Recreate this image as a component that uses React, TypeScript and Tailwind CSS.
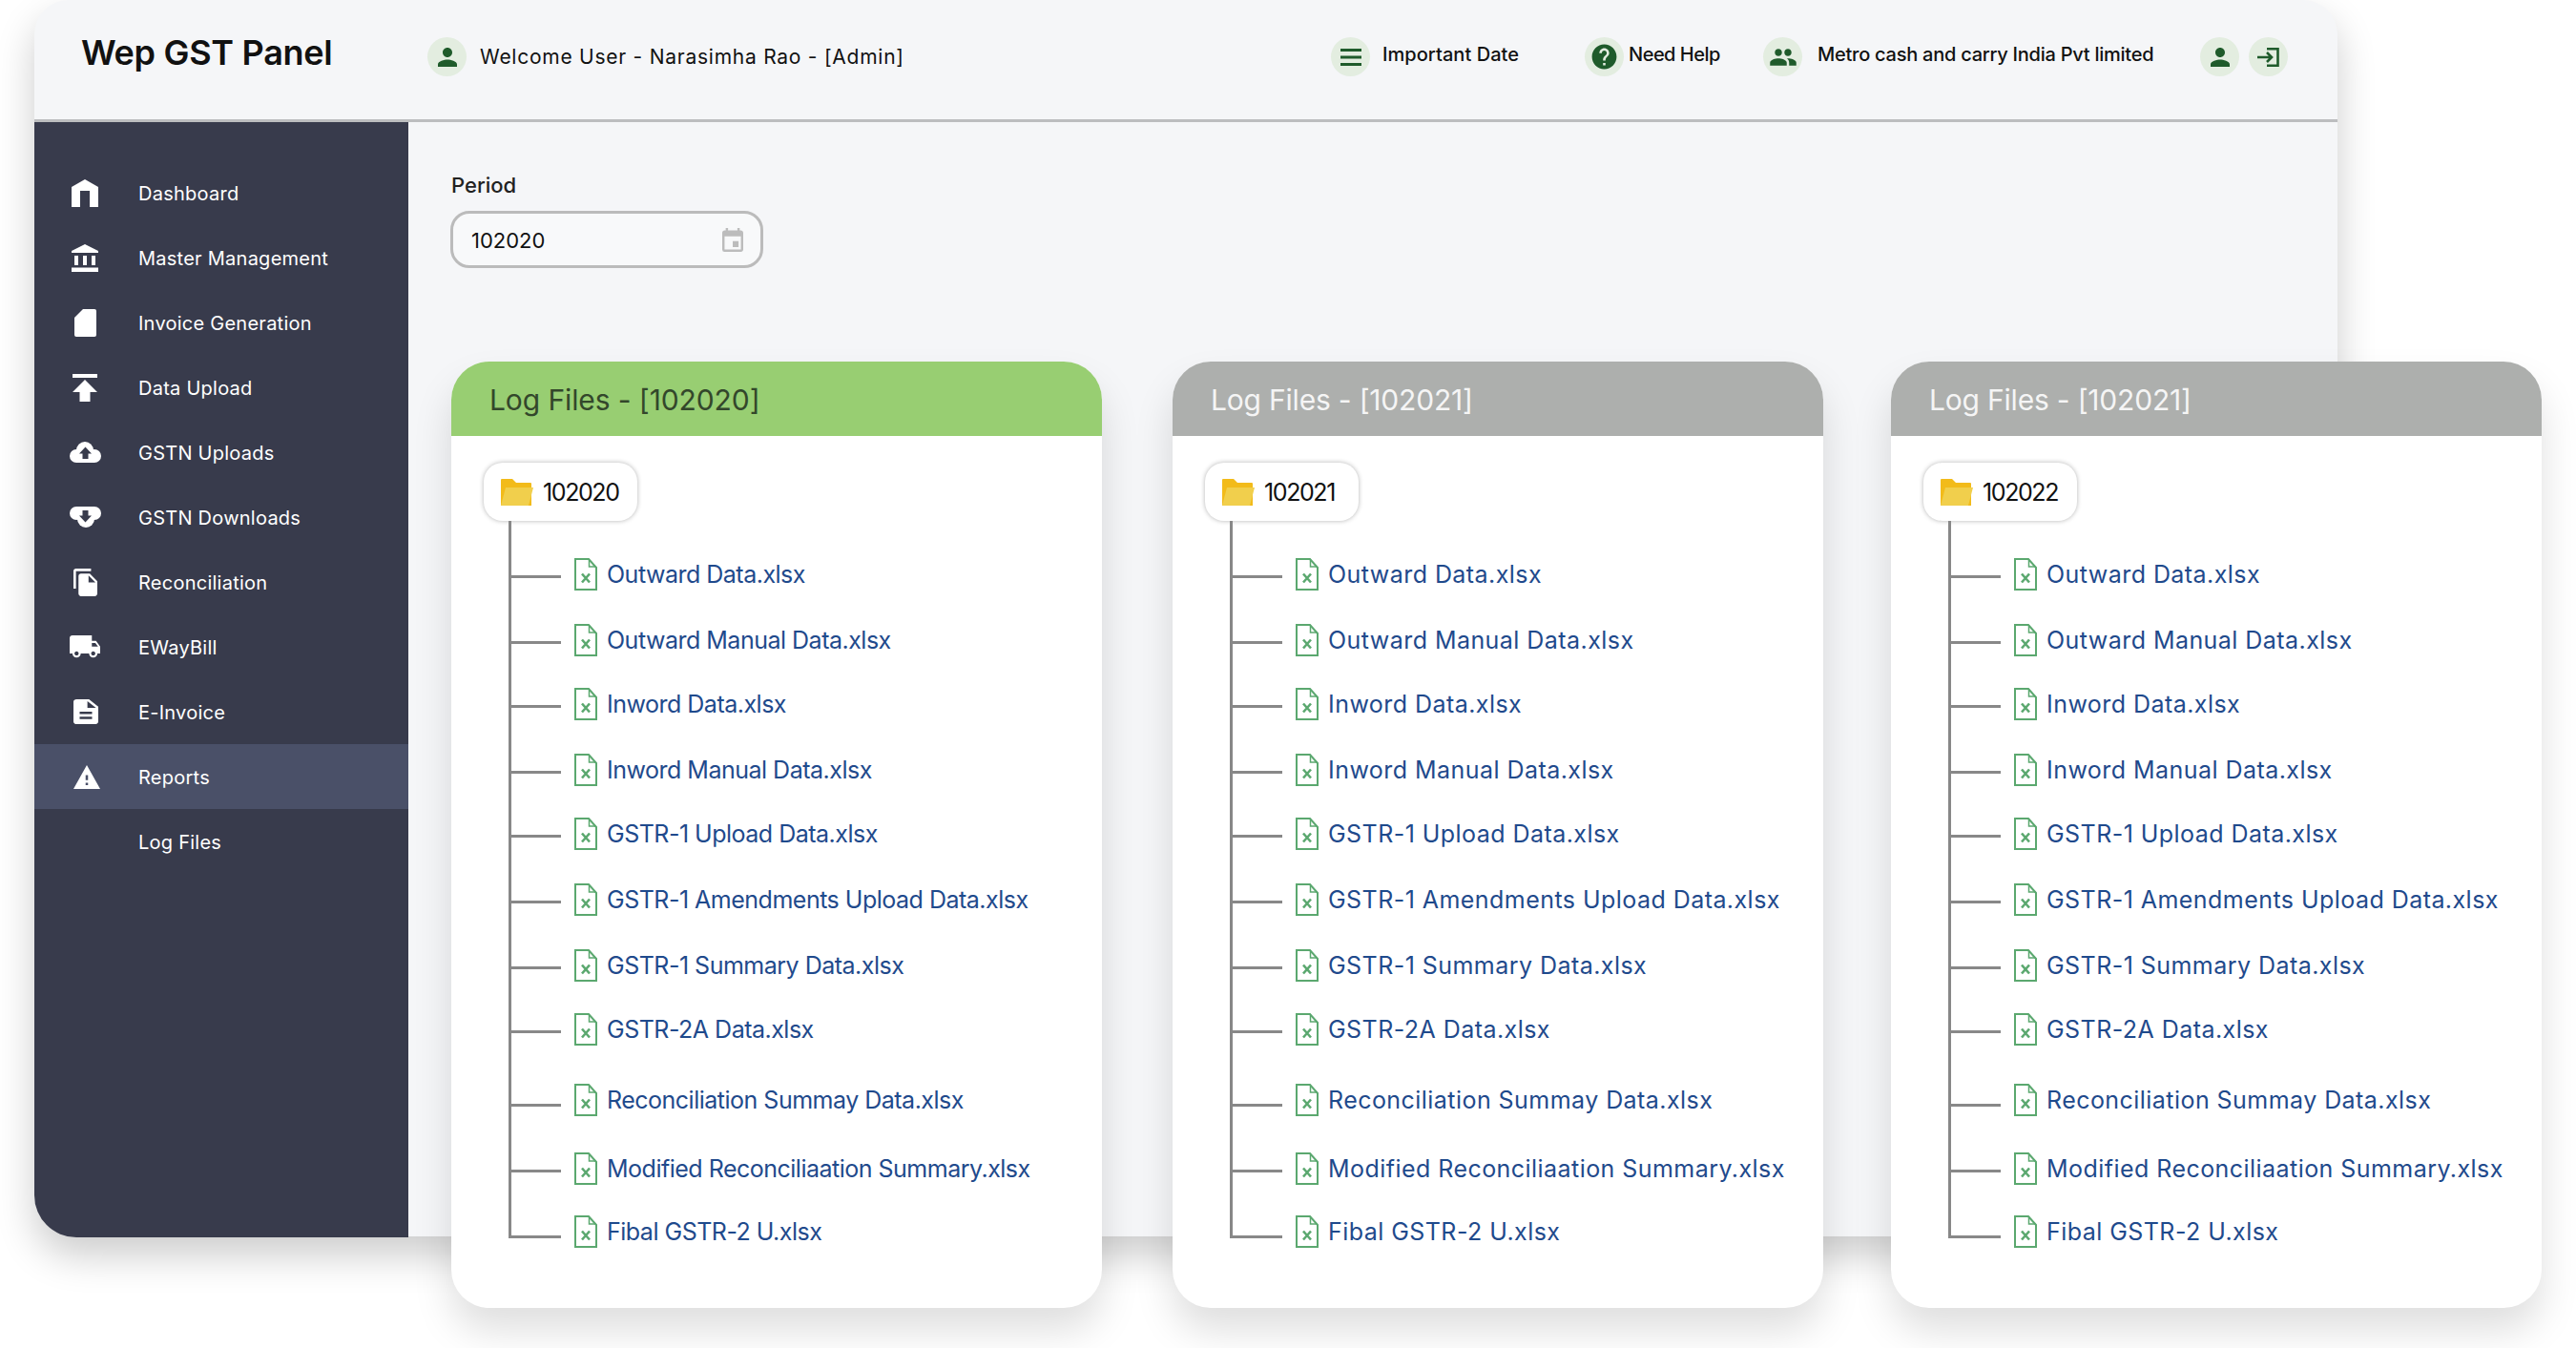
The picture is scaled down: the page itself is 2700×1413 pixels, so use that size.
import type { ReactNode } from "react";
import {
  MdDescription,
  MdEvent,
  MdFileCopy,
  MdHelp,
  MdLocalShipping,
  MdMenu,
  MdPeople,
  MdPerson,
  MdWarning,
} from "react-icons/md";

function HomeIcon() {
  return (
    <svg width="28" height="29" viewBox="0 0 28 29" fill="currentColor">
      <path d="M14 0L28 8V29H19V12H9V29H0V8Z" />
    </svg>
  );
}

function BankIcon() {
  return (
    <svg width="28" height="29" viewBox="0 0 28 29" fill="currentColor">
      <path d="M14 0L28 7V9H0V7ZM3 12H7V22H3ZM12 12H16V22H12ZM21 12H25V22H21ZM0 24.5H28V29H0Z" />
    </svg>
  );
}

function PageIcon() {
  return (
    <svg width="23" height="29" viewBox="0 0 23 29" fill="currentColor">
      <path d="M9 0H21a2 2 0 0 1 2 2V27a2 2 0 0 1-2 2H2a2 2 0 0 1-2-2V9Z" />
    </svg>
  );
}

function UploadIcon() {
  return (
    <svg width="26" height="29" viewBox="0 0 26 29" fill="currentColor">
      <path d="M0 0H26V4H0ZM13 6L26 19H18.5V29H7.5V19H0Z" />
    </svg>
  );
}

// same cloud for both, the download one is just flipped
function CloudIcon({ flip }: { flip?: boolean }) {
  return (
    <svg width="33" height="22" viewBox="0 0 33 22" className={flip ? "rotate-180" : ""}>
      <circle cx="16" cy="9" r="9" fill="#fff" />
      <circle cx="7" cy="15" r="7" fill="#fff" />
      <circle cx="26" cy="15" r="7" fill="#fff" />
      <rect x="7" y="10" width="19" height="12" fill="#fff" />
      <path d="M16.5 5.5L23 12.5H19.5V18H13.5V12.5H10Z" fill="#383b4c" />
    </svg>
  );
}

function LoginIcon() {
  return (
    <svg width="23" height="20" viewBox="0 0 23 20" fill="none" stroke="currentColor" strokeWidth="2.6">
      <path d="M10 1.3H21.5V18.7H10M0 10H15M10 5L15 10L10 15" />
    </svg>
  );
}

function FolderIcon() {
  return (
    <svg width="34" height="28" viewBox="0 0 34 28" className="shrink-0">
      <path d="M0 1a1 1 0 0 1 1-1h11l4 4h15a1 1 0 0 1 1 1v23H0z" fill="#f2bb1a" />
      <path d="M5 9h29l-5 19H0z" fill="#f1cf4c" />
    </svg>
  );
}

function XlsxIcon() {
  return (
    <svg width="24" height="34" viewBox="0 0 24 34" fill="none" className="shrink-0">
      <path d="M1 1h14l8 9v23H1z" stroke="#5ba86f" strokeWidth="2" />
      <path d="M15.5 1.5v7.5h7" stroke="#5ba86f" strokeWidth="1.5" />
      <path d="M8 16.5l8 9M16 16.5l-8 9" stroke="#5ba86f" strokeWidth="2.6" />
    </svg>
  );
}

const navItems = [
  { label: "Dashboard", icon: <HomeIcon /> },
  { label: "Master Management", icon: <BankIcon /> },
  { label: "Invoice Generation", icon: <PageIcon /> },
  { label: "Data Upload", icon: <UploadIcon /> },
  { label: "GSTN Uploads", icon: <CloudIcon /> },
  { label: "GSTN Downloads", icon: <CloudIcon flip /> },
  {
    label: "Reconciliation",
    icon: <MdFileCopy viewBox="2 1 19 22" preserveAspectRatio="none" className="h-[29px] w-[25px]" />,
  },
  {
    label: "EWayBill",
    icon: <MdLocalShipping viewBox="1 4 22 16.5" preserveAspectRatio="none" className="h-[24px] w-[32px]" />,
  },
  {
    label: "E-Invoice",
    icon: <MdDescription viewBox="4 2 16 20" preserveAspectRatio="none" className="ml-[2px] h-[26px] w-[26px]" />,
  },
  {
    label: "Reports",
    icon: <MdWarning viewBox="1 2 22 19" preserveAspectRatio="none" className="ml-[4px] h-[25px] w-[28px]" />,
    active: true,
  },
  { label: "Log Files", icon: null },
];

// spacing is uneven in the design, kept per row
const files = [
  { name: "Outward Data.xlsx", row: "mt-[36px]", stub: "mt-[4px]" },
  { name: "Outward Manual Data.xlsx", row: "mt-[29px]", stub: "mt-[4px]" },
  { name: "Inword Data.xlsx", row: "mt-[27px]", stub: "mt-[4px]" },
  { name: "Inword Manual Data.xlsx", row: "mt-[29px]", stub: "mt-[4px]" },
  { name: "GSTR-1 Upload Data.xlsx", row: "mt-[27px]", stub: "mt-[4px]" },
  { name: "GSTR-1 Amendments Upload Data.xlsx", row: "mt-[29px]", stub: "mt-[4px]" },
  { name: "GSTR-1 Summary Data.xlsx", row: "mt-[29px]", stub: "mt-[4px]" },
  { name: "GSTR-2A Data.xlsx", row: "mt-[27px]", stub: "mt-[4px]" },
  { name: "Reconciliation Summay Data.xlsx", row: "mt-[34px]", stub: "mt-[10px]" },
  { name: "Modified Reconciliaation Summary.xlsx", row: "mt-[32px]", stub: "mt-[4px]" },
  { name: "Fibal GSTR-2 U.xlsx", row: "mt-[26px]", stub: "mt-[10px]" },
];

const cards = [
  {
    title: "Log Files - [102020]",
    folder: "102020",
    head: "bg-[#98ce72] text-[#33472b] tracking-[-0.1px]",
    text: "tracking-[-0.5px]",
    gap: "",
  },
  {
    title: "Log Files - [102021]",
    folder: "102021",
    head: "bg-[#adafad] text-[#f5f5f5] tracking-[-0.2px]",
    text: "tracking-[0.45px]",
    gap: "ml-[74px]",
  },
  {
    title: "Log Files - [102021]",
    folder: "102022",
    head: "bg-[#adafad] text-[#f5f5f5] tracking-[-0.2px]",
    text: "tracking-[0.45px]",
    gap: "ml-[71px]",
  },
];

function Badge({ children }: { children: ReactNode }) {
  return (
    <span className="flex h-[41px] w-[41px] shrink-0 items-center justify-center rounded-full bg-[#e3ede0] text-[#1f5b2b]">
      {children}
    </span>
  );
}

function LogCard({ card }: { card: (typeof cards)[number] }) {
  return (
    <section
      className={`flex h-[992px] w-[682px] shrink-0 flex-col overflow-hidden rounded-[40px] bg-white shadow-[0_24px_40px_rgba(0,0,0,0.13)] ${card.gap}`}
    >
      <h2 className={`flex h-[78px] shrink-0 items-center pl-[40px] text-[30px] leading-[34px] font-normal ${card.head}`}>
        <span className="translate-y-[1px]">{card.title}</span>
      </h2>
      <div className="mt-[28px] ml-[34px] flex h-[61px] w-[161px] items-center gap-[10px] rounded-[20px] bg-white pl-[18px] text-[25px] text-[#111] shadow-[0_0_5px_rgba(0,0,0,0.3)]">
        <FolderIcon />
        <span className="translate-y-[1px] tracking-[-1.4px]">{card.folder}</span>
      </div>
      <ul className="ml-[60px] h-[752px] border-l-[3px] border-[#888]">
        {files.map((f) => (
          <li key={f.name} className={`flex h-[40px] items-center ${f.row}`}>
            <span className={`h-[3px] w-[52px] shrink-0 bg-[#888] ${f.stub}`} />
            <span className="ml-[14px]">
              <XlsxIcon />
            </span>
            <span className={`ml-[10px] translate-y-[1px] whitespace-nowrap text-[25px] text-[#1f4a8c] ${card.text}`}>
              {f.name}
            </span>
          </li>
        ))}
      </ul>
    </section>
  );
}

export default function App() {
  return (
    <div className="h-[1413px] w-[2700px] overflow-hidden bg-white font-['Inter','Liberation_Sans',sans-serif]">
      <div className="ml-[36px] flex h-[1296px] w-[2414px] flex-col rounded-t-[36px] rounded-bl-[44px] bg-[#f5f6f8] shadow-[0_20px_40px_rgba(0,0,0,0.2)]">
        {/* Top bar */}
        <header className="flex h-[128px] shrink-0 border-b-[3px] border-[#bcbdbf] pt-[39px] text-[#111]">
          <h1 className="ml-[49px] w-[363px] -translate-y-[2px] text-[36px] leading-[36px] font-semibold tracking-[-0.3px]">
            Wep GST Panel
          </h1>
          <Badge>
            <MdPerson size={30} />
          </Badge>
          <span className="ml-[14px] w-[892px] text-[21px] leading-[41px] tracking-[0.75px]">
            Welcome User - Narasimha Rao - [Admin]
          </span>
          <Badge>
            <MdMenu viewBox="3 6 18 12" preserveAspectRatio="none" className="h-[18px] w-[22px]" />
          </Badge>
          <span className="ml-[13px] w-[212px] -translate-y-[2px] text-[20px] leading-[41px] font-medium tracking-[0.05px]">
            Important Date
          </span>
          <Badge>
            <MdHelp size={31} />
          </Badge>
          <span className="ml-[5px] w-[141px] -translate-y-[2px] text-[20px] leading-[41px] font-medium tracking-[-0.5px]">
            Need Help
          </span>
          <Badge>
            <MdPeople size={30} />
          </Badge>
          <span className="ml-[16px] w-[401px] -translate-y-[2px] text-[20px] leading-[41px] font-medium tracking-[-0.25px]">
            Metro cash and carry India Pvt limited
          </span>
          <Badge>
            <MdPerson size={30} />
          </Badge>
          <span className="ml-[10px]">
            <Badge>
              <LoginIcon />
            </Badge>
          </span>
        </header>

        <div className="flex min-h-0 flex-1">
          {/* Sidebar */}
          <nav className="h-[1169px] w-[392px] shrink-0 rounded-bl-[44px] bg-[#383b4c] pt-[40px] text-white">
            {navItems.map((item) => (
              <div
                key={item.label}
                className={`flex h-[68px] items-center ${item.active ? "bg-[#4a5068]" : ""}`}
              >
                <span className="ml-[33px] mr-[36px] flex w-[40px] shrink-0 justify-center">{item.icon}</span>
                <span className="translate-y-[1px] text-[20px] tracking-[0.25px]">{item.label}</span>
              </div>
            ))}
          </nav>

          {/* Content */}
          <main className="min-w-0 flex-1 pl-[45px] pt-[51px]">
            <label className="block text-[22px] leading-[30px] font-medium text-[#222]">Period</label>
            <div className="-ml-[1px] mt-[12px] flex h-[60px] w-[328px] items-center justify-between rounded-[20px] border-[3px] border-[#bbbbbb] bg-[#f8f9fa] pl-[19px] pr-[18px] text-[22px] text-[#111]">
              <span className="translate-y-[1px]">102020</span>
              <MdEvent viewBox="3 1 18 20" preserveAspectRatio="none" className="h-[25px] w-[22px] text-[#bcbcbc]" />
            </div>
            <div className="mt-[98px] flex">
              {cards.map((c) => (
                <LogCard key={c.folder} card={c} />
              ))}
            </div>
          </main>
        </div>
      </div>
    </div>
  );
}
